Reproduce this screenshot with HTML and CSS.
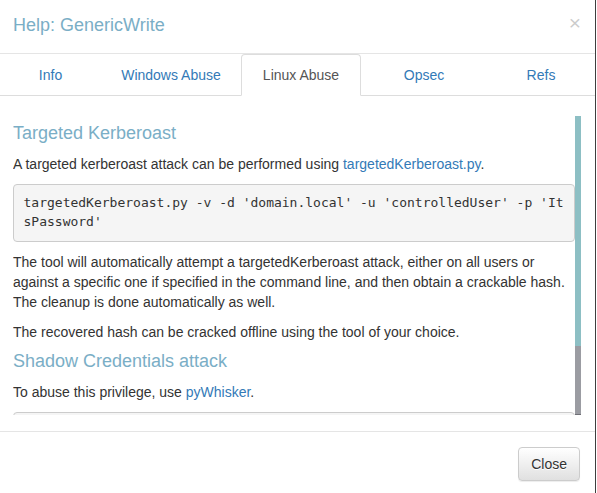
FILE: index.html
```html
<!DOCTYPE html>
<html>
<head>
<meta charset="utf-8">
<title>Help: GenericWrite</title>
<link rel="stylesheet" href="styles.css">
</head>
<body>
<div class="modal">
  <div class="modal-header">
    <h4 class="modal-title">Help: GenericWrite</h4>
    <button class="close" type="button">×</button>
  </div>
  <ul class="nav-tabs">
    <li><a href="#">Info</a></li>
    <li><a href="#">Windows Abuse</a></li>
    <li class="active"><a href="#">Linux Abuse</a></li>
    <li><a href="#">Opsec</a></li>
    <li><a href="#">Refs</a></li>
  </ul>
  <div class="tab-content">
    <div class="scroll">
      <h4 class="section-title">Targeted Kerberoast</h4>
      <p>A targeted kerberoast attack can be performed using <a href="#">targetedKerberoast.py</a>.</p>
      <pre class="code">targetedKerberoast.py -v -d 'domain.local' -u 'controlledUser' -p 'ItsPassword'</pre>
      <p>The tool will automatically attempt a targetedKerberoast attack, either on all users or against a specific one if specified in the command line, and then obtain a crackable hash. The cleanup is done automatically as well.</p>
      <p>The recovered hash can be cracked offline using the tool of your choice.</p>
      <h4 class="section-title">Shadow Credentials attack</h4>
      <p>To abuse this privilege, use <a href="#">pyWhisker</a>.</p>
      <pre class="code">pywhisker.py -d "domain.local" -u "controlledAccount" -p "somepassword" --target "targetAccount" --action "add"</pre>
    </div>
    <div class="scrollbar"><div class="thumb"></div></div>
  </div>
  <div class="modal-footer">
    <button class="btn" type="button">Close</button>
  </div>
</div>
</body>
</html>
```

FILE: styles.css
```css
* { box-sizing: border-box; }

body {
  margin: 0;
  background: #fff;
  font-family: "Liberation Sans", Arial, sans-serif;
  font-size: 14px;
  line-height: 20px;
  color: #333;
}

a { color: #337ab7; text-decoration: none; }

.modal {
  width: 596px;
  height: 493px;
  overflow: hidden;
  border-right: 1px solid #3e3e3e;
  background: #fff;
}

.modal-header {
  display: flex;
  justify-content: space-between;
  align-items: flex-start;
  padding: 13px 14px 15px 13px;
  border-bottom: 1px solid #e5e5e5;
}

.modal-title {
  margin: 0;
  font-size: 18px;
  line-height: 25px;
  font-weight: normal;
  color: #7aaec6;
}

.close {
  border: 0;
  background: none;
  padding: 0;
  margin-top: -1px;
  font-family: "Liberation Sans", Arial, sans-serif;
  font-size: 21px;
  font-weight: normal;
  line-height: 1;
  color: #000;
  opacity: 0.2;
}

.nav-tabs {
  list-style: none;
  margin: 0;
  padding: 0;
  display: grid;
  grid-template-columns: 101px 140px 120px 126px 1fr;
  border-bottom: 1px solid #ddd;
}

.nav-tabs li { margin-bottom: -1px; }

.nav-tabs a {
  display: block;
  padding: 10px 15px;
  line-height: 20px;
  text-align: center;
  border: 1px solid transparent;
  border-radius: 4px 4px 0 0;
}

.nav-tabs .active a {
  color: #555;
  background: #fff;
  border-color: #ddd #ddd transparent;
}

.tab-content {
  display: flex;
  padding: 20px 14px 0 13px;
}

.scroll {
  flex: 1;
  min-width: 0;
  height: 299px;
  overflow: hidden;
}

.scrollbar {
  width: 6px;
  height: 299px;
  background: #9b9ca2;
  border-bottom: 1px solid #6f7076;
}

.thumb {
  height: 230px;
  background: #8dbfc4;
}

.section-title {
  margin: 10px 0;
  font-size: 18px;
  line-height: 1.1;
  font-weight: normal;
  color: #7aaec6;
}

.section-title:first-child { margin-top: 8px; }

.scroll p { margin: 0 0 10px; }

.code {
  margin: 0 0 10px;
  padding: 9.5px;
  font-family: "DejaVu Sans Mono", monospace;
  font-size: 13px;
  line-height: 1.42857;
  color: #333;
  background: #f5f5f5;
  border: 1px solid #ccc;
  border-radius: 4px;
  white-space: pre-wrap;
  word-break: break-all;
}

.modal-footer {
  margin-top: 16px;
  border-top: 1px solid #e5e5e5;
  padding: 15px;
  text-align: right;
}

.btn {
  font-family: "Liberation Sans", Arial, sans-serif;
  font-size: 14px;
  line-height: 20px;
  padding: 6px 12px;
  color: #333;
  border: 1px solid #ccc;
  border-radius: 4px;
  background: linear-gradient(to bottom, #fff 0, #e0e0e0 100%);
  text-shadow: 0 1px 0 #fff;
  box-shadow: inset 0 1px 0 rgba(255,255,255,.15), 0 1px 1px rgba(0,0,0,.075);
}
```
